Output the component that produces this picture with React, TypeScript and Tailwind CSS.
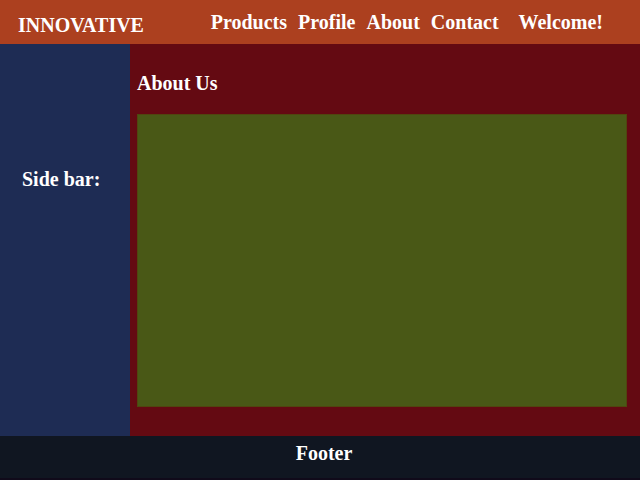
const links = ["Products", "Profile", "About", "Contact"];

export default function App() {
  return (
    <div className="flex min-h-screen flex-col bg-[#640a12] font-['Palatino_Linotype','Liberation_Serif',serif] text-xl leading-6 font-bold text-white">
      <header className="flex items-start justify-between bg-[#ac401f] pr-[37px] pb-[7px] pl-[18px]">
        <h1 className="pt-[13px]">INNOVATIVE</h1>
        <nav className="flex gap-5 pt-2.5">
          <ul className="flex gap-[11px]">
            {links.map((label) => (
              <li key={label}>
                <a href={`#${label.toLowerCase()}`}>{label}</a>
              </li>
            ))}
          </ul>
          <a href="#welcome">Welcome!</a>
        </nav>
      </header>

      <div className="flex grow">
        <aside className="w-[130px] shrink-0 bg-[#1e2c54] pt-[123px] pl-[22px]">
          <h2>Side bar:</h2>
        </aside>
        <main className="flex grow flex-col pt-[27px] pr-[13px] pb-[29px] pl-[7px]">
          <h2>About Us</h2>
          <section
            aria-label="About Us content"
            className="mt-[19px] grow border border-[#50460f] bg-[#495816]"
          />
        </main>
      </div>

      <footer className="border-b-2 border-[#100a1a] bg-[#101621] pt-[5px] pb-[13px] pl-2 text-center">
        Footer
      </footer>
    </div>
  );
}
